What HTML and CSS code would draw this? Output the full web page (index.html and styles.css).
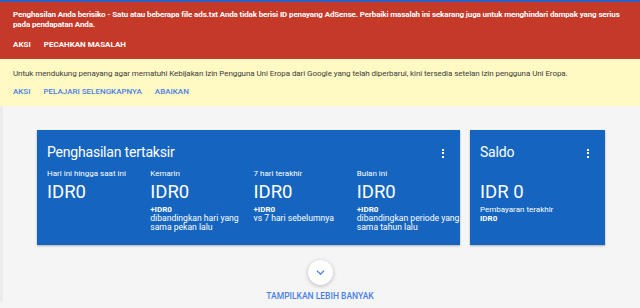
FILE: index.html
```html
<!DOCTYPE html>
<html lang="id">
<head>
    <meta charset="UTF-8">
    <title>AdSense - Beranda</title>
    <link rel="stylesheet" href="styles.css">
</head>
<body>
    <div class="topline"></div>

    <div class="alert alert-red">
        <p class="alert-text">Penghasilan Anda berisiko - Satu atau beberapa file ads.txt Anda tidak berisi ID penayang AdSense. Perbaiki masalah ini sekarang juga untuk menghindari dampak yang serius pada pendapatan Anda.</p>
        <div class="alert-actions">
            <a>AKSI</a>
            <a>PECAHKAN MASALAH</a>
        </div>
    </div>

    <div class="alert alert-yellow">
        <p class="alert-text">Untuk mendukung penayang agar mematuhi Kebijakan Izin Pengguna Uni Eropa dari Google yang telah diperbarui, kini tersedia setelan izin pengguna Uni Eropa.</p>
        <div class="alert-actions">
            <a>AKSI</a>
            <a>PELAJARI SELENGKAPNYA</a>
            <a>ABAIKAN</a>
        </div>
    </div>

    <div class="main">
        <div class="cards">
            <div class="card card-earnings">
                <div class="card-head">
                    <h2>Penghasilan tertaksir</h2>
                    <span class="more"><i></i><i></i><i></i></span>
                </div>
                <div class="stats">
                    <div class="stat">
                        <div class="stat-label">Hari ini hingga saat ini</div>
                        <div class="stat-value">IDR0</div>
                    </div>
                    <div class="stat">
                        <div class="stat-label">Kemarin</div>
                        <div class="stat-value">IDR0</div>
                        <div class="stat-delta">+IDR0</div>
                        <div class="stat-note">dibandingkan hari yang sama pekan lalu</div>
                    </div>
                    <div class="stat">
                        <div class="stat-label">7 hari terakhir</div>
                        <div class="stat-value">IDR0</div>
                        <div class="stat-delta">+IDR0</div>
                        <div class="stat-note">vs 7 hari sebelumnya</div>
                    </div>
                    <div class="stat">
                        <div class="stat-label">Bulan ini</div>
                        <div class="stat-value">IDR0</div>
                        <div class="stat-delta">+IDR0</div>
                        <div class="stat-note">dibandingkan periode yang sama tahun lalu</div>
                    </div>
                </div>
            </div>

            <div class="card card-balance">
                <div class="card-head">
                    <h2>Saldo</h2>
                    <span class="more"><i></i><i></i><i></i></span>
                </div>
                <div class="stat">
                    <div class="stat-label stat-label-blank"></div>
                    <div class="stat-value">IDR 0</div>
                    <div class="stat-note">Pembayaran terakhir</div>
                    <div class="stat-delta">IDR0</div>
                </div>
            </div>
        </div>

        <div class="show-more">
            <span class="chevron">
                <svg width="9" height="5" viewBox="0 0 9 5"><path d="M1 0.8l3.5 3.4 3.5-3.4" fill="none" stroke="#4285f4" stroke-width="1.3"/></svg>
            </span>
            <a class="show-more-link">TAMPILKAN LEBIH BANYAK</a>
        </div>
    </div>
</body>
</html>
```

FILE: styles.css
```css
body {
    margin: 0;
    font-family: Roboto, "Liberation Sans", sans-serif;
    background-color: #f5f5f5;
    height: 308px;
    overflow: hidden;
}

.topline {
    height: 2px;
    background-color: #2a62c9;
}

.alert {
    padding: 8px 13px 9px;
}

.alert-red {
    background-color: #c53929;
    color: white;
    font-weight: bold;
}

.alert-red .alert-text {
    letter-spacing: -0.13px;
}

.alert-yellow {
    background-color: #fff9c4;
    color: #3c3c3c;
    padding-top: 10px;
    padding-bottom: 9px;
}

.alert-yellow .alert-text {
    letter-spacing: -0.07px;
}

.alert-text {
    margin: 0;
    font-size: 8px;
    line-height: 10px;
}

.alert-actions {
    display: flex;
    gap: 13px;
    margin-top: 10px;
    font-size: 8px;
    line-height: 10px;
}

.alert-yellow .alert-actions {
    margin-top: 8px;
    color: #4a7fe6;
    font-weight: 500;
}

.main {
    padding: 24px 0 0 34px;
    border-left: 3px solid #ececec;
}

.cards {
    display: flex;
    gap: 10px;
}

.card {
    background-color: #1565c0;
    color: white;
    height: 115px;
    box-sizing: border-box;
    padding: 13px 0 0 10px;
    box-shadow: 0 1px 2px rgba(0, 0, 0, 0.3);
}

.card-earnings {
    width: 423px;
}

.card-balance {
    width: 135px;
}

.card-head {
    display: flex;
    justify-content: space-between;
    align-items: center;
}

.card-head h2 {
    margin: 0;
    font-size: 14px;
    font-weight: normal;
    line-height: 19px;
    letter-spacing: -0.2px;
}

.more {
    display: flex;
    flex-direction: column;
    gap: 1.5px;
    margin-right: 16px;
    margin-top: 1px;
}

.more i {
    width: 2px;
    height: 2px;
    background-color: white;
}

.stats {
    display: grid;
    grid-template-columns: repeat(4, 1fr);
}

.stat-label {
    margin-top: 7px;
    font-size: 8px;
    line-height: 10px;
}

.stat-label-blank {
    height: 10px;
}

.stat-value {
    margin-top: 2px;
    font-size: 18.5px;
    line-height: 22px;
}

.stat-delta {
    margin-top: 2px;
    font-size: 8px;
    line-height: 9px;
    font-weight: bold;
}

.stat-note {
    font-size: 8.6px;
    line-height: 9px;
}

.card-balance .stat-note {
    margin-top: 2px;
    font-size: 8px;
}

.card-balance .stat-delta {
    margin-top: 0;
}

.show-more {
    display: flex;
    flex-direction: column;
    align-items: center;
    margin-left: -37px;
    margin-top: 15px;
}

.chevron {
    width: 25px;
    height: 25px;
    border-radius: 50%;
    background-color: white;
    box-shadow: 0 1px 4px rgba(0, 0, 0, 0.25);
    display: flex;
    align-items: center;
    justify-content: center;
}

.show-more-link {
    margin-top: 6px;
    font-size: 8.5px;
    line-height: 11px;
    color: #4a7fe6;
    font-weight: 500;
}
```
